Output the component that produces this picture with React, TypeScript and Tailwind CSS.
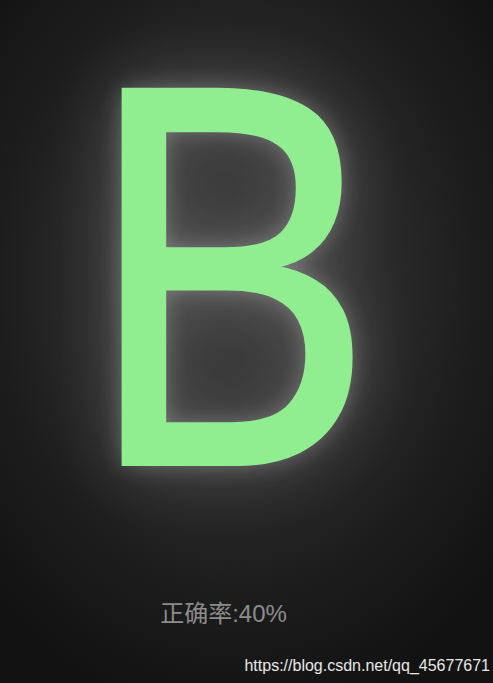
export default function App() {
  return (
    <div className="relative w-[493px] h-[683px] overflow-hidden bg-[#141414] bg-[radial-gradient(ellipse_340px_440px_at_237px_280px,#3e3e3e_0%,#2c2c2c_40%,#1d1d1d_70%,#121212_100%)]">
      <div className="flex flex-col items-center">
        <div className="h-[580px] w-full">
          <div
            className="origin-left scale-x-[0.87] text-[524px] leading-none text-[#90ee90] [font-family:'Noto_Sans',sans-serif] [-webkit-text-stroke:4px_#90ee90] [text-shadow:0_0_25px_rgba(255,255,255,0.3),0_0_80px_rgba(255,255,255,0.25)] pl-[91px] mt-[-1px]"
          >
            B
          </div>
        </div>
        <div className="mt-[22px] ml-[-46px] text-[24px] leading-none text-[#8c8c8c] [font-family:'Liberation_Sans','Noto_Sans_CJK_SC',sans-serif]">
          正确率:40%
        </div>
      </div>
      <div className="absolute right-[3px] bottom-[9px] text-[16px] leading-none text-white/90 [font-family:'Liberation_Sans',sans-serif]">
        https://blog.csdn.net/qq_45677671
      </div>
    </div>
  );
}
